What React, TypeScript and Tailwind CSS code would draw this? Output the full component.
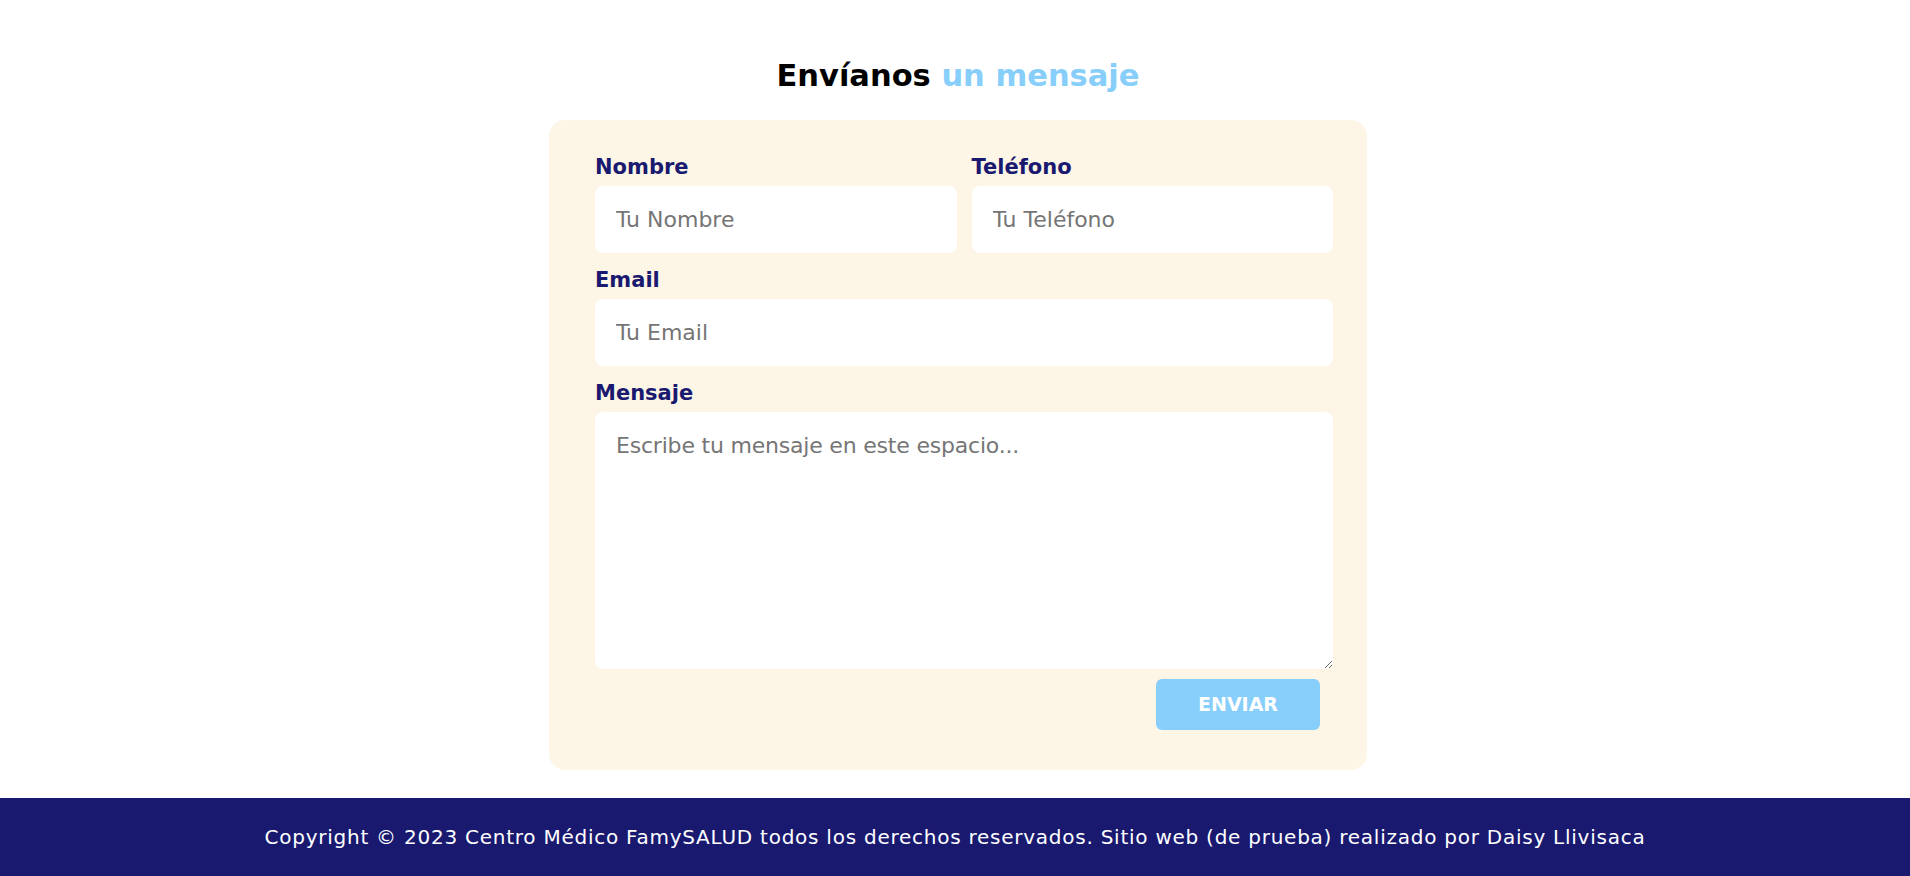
export default function App() {
  const font = { fontFamily: '"DejaVu Sans", "Liberation Sans", sans-serif' };

  return (
    <div className="min-h-screen bg-white flex flex-col" style={font}>
      <main className="flex-1 flex flex-col items-center pt-[56px] pb-[28px] pl-[6px]">
        <h2 className="h-10 leading-10 text-[30.5px] font-bold text-black">
          Envíanos <span className="text-[#87cefa]">un mensaje</span>
        </h2>

        <form
          className="mt-[24px] w-[818px] bg-[#fdf5e6] rounded-2xl pt-[33px] pl-[46px] pr-[34px] pb-[40px]"
          onSubmit={(e) => e.preventDefault()}
        >
          <div className="grid grid-cols-2 gap-[15px]">
            <div>
              <label className="block text-[21px] leading-7 font-bold text-[#191970]">Nombre</label>
              <input
                type="text"
                placeholder="Tu Nombre"
                className="mt-[5px] block w-full h-[67px] bg-white rounded-lg px-[21px] text-[22px] outline-none placeholder:text-[#757575]"
              />
            </div>
            <div>
              <label className="block text-[21px] leading-7 font-bold text-[#191970]">Teléfono</label>
              <input
                type="text"
                placeholder="Tu Teléfono"
                className="mt-[5px] block w-full h-[67px] bg-white rounded-lg px-[21px] text-[22px] outline-none placeholder:text-[#757575]"
              />
            </div>
          </div>

          <div className="mt-[13px]">
            <label className="block text-[21px] leading-7 font-bold text-[#191970]">Email</label>
            <input
              type="email"
              placeholder="Tu Email"
              className="mt-[5px] block w-full h-[67px] bg-white rounded-lg px-[21px] text-[22px] outline-none placeholder:text-[#757575]"
            />
          </div>

          <div className="mt-[13px]">
            <label className="block text-[21px] leading-7 font-bold text-[#191970]">Mensaje</label>
            <textarea
              placeholder="Escribe tu mensaje en este espacio..."
              className="mt-[5px] block w-full h-[257px] bg-white rounded-lg px-[21px] py-[20px] text-[22px] tracking-[-0.2px] leading-7 outline-none placeholder:text-[#757575]"
            />
          </div>

          <div className="flex justify-end mt-[10px] pr-[13px]">
            <button
              type="submit"
              className="w-[164px] h-[51px] rounded-md bg-[#87cefa] text-white text-[19px] font-bold"
            >
              ENVIAR
            </button>
          </div>
        </form>
      </main>

      <footer className="h-[78px] bg-[#191970] flex items-center justify-center">
        <p className="text-white text-[20px] tracking-[0.75px]">
          Copyright © 2023 Centro Médico FamySALUD todos los derechos reservados. Sitio web (de prueba) realizado por Daisy Llivisaca
        </p>
      </footer>
    </div>
  );
}
